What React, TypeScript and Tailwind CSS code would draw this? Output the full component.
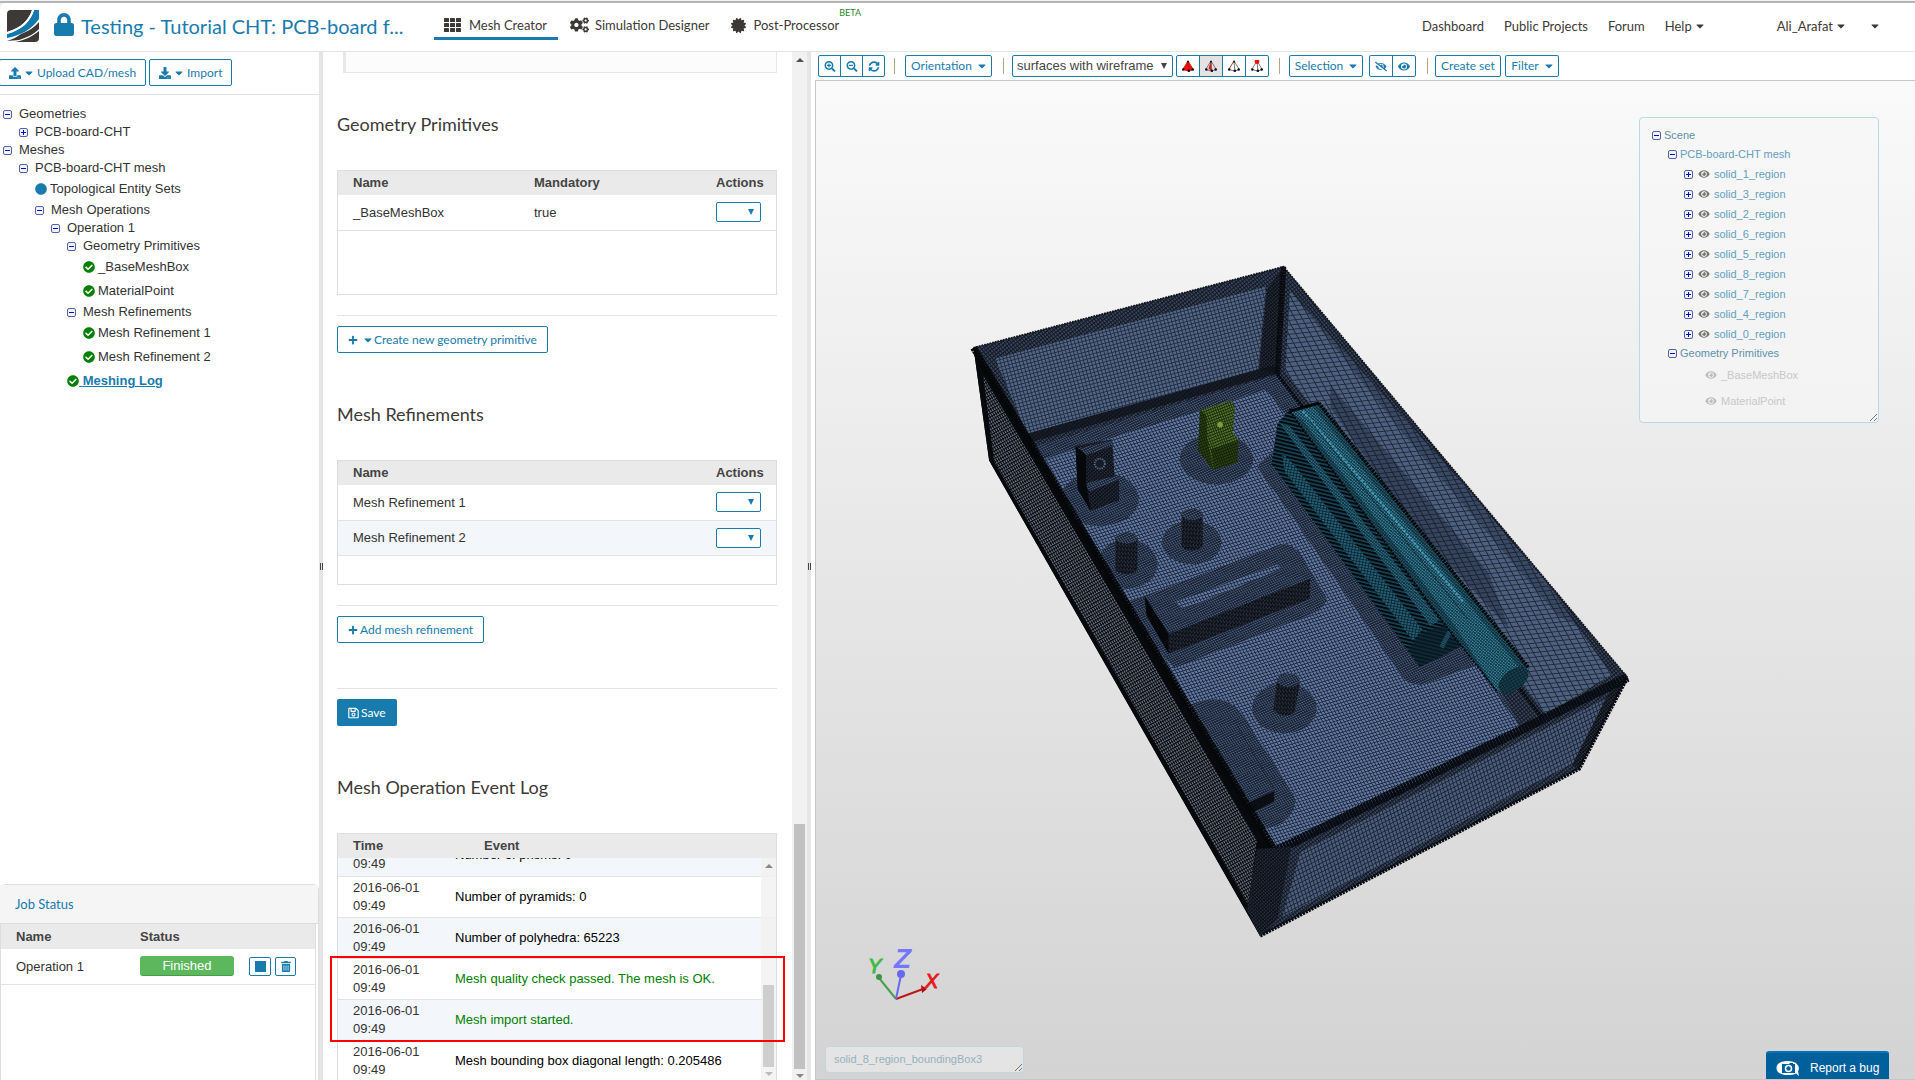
import type { ReactNode } from 'react';
import {
  FaCaretDown,
  FaCertificate,
  FaCheckCircle,
  FaCircle,
  FaCogs,
  FaDownload,
  FaEye,
  FaEyeSlash,
  FaLock,
  FaPlus,
  FaRegSave,
  FaSearchMinus,
  FaSearchPlus,
  FaSyncAlt,
  FaTrashAlt,
  FaUpload,
} from 'react-icons/fa';

const outlineButton =
  'flex items-center border border-[#187bae] rounded-xs bg-white text-[#187bae] whitespace-nowrap';

type TreeItem = { label: string; indent: string; kind: 'open' | 'closed' | 'dot' | 'ok' | 'active' };

const treeItems: TreeItem[] = [
  { label: 'Geometries', indent: 'pl-[3px]', kind: 'open' },
  { label: 'PCB-board-CHT', indent: 'pl-[19px]', kind: 'closed' },
  { label: 'Meshes', indent: 'pl-[3px]', kind: 'open' },
  { label: 'PCB-board-CHT mesh', indent: 'pl-[19px]', kind: 'open' },
  { label: 'Topological Entity Sets', indent: 'pl-[35px]', kind: 'dot' },
  { label: 'Mesh Operations', indent: 'pl-[35px]', kind: 'open' },
  { label: 'Operation 1', indent: 'pl-[51px]', kind: 'open' },
  { label: 'Geometry Primitives', indent: 'pl-[67px]', kind: 'open' },
  { label: '_BaseMeshBox', indent: 'pl-[83px]', kind: 'ok' },
  { label: 'MaterialPoint', indent: 'pl-[83px]', kind: 'ok' },
  { label: 'Mesh Refinements', indent: 'pl-[67px]', kind: 'open' },
  { label: 'Mesh Refinement 1', indent: 'pl-[83px]', kind: 'ok' },
  { label: 'Mesh Refinement 2', indent: 'pl-[83px]', kind: 'ok' },
  { label: 'Meshing Log', indent: 'pl-[67px]', kind: 'active' },
];

const logEvents = [
  { text: 'Number of prisms: 0', good: false },
  { text: 'Number of pyramids: 0', good: false },
  { text: 'Number of polyhedra: 65223', good: false },
  { text: 'Mesh quality check passed. The mesh is OK.', good: true },
  { text: 'Mesh import started.', good: true },
  { text: 'Mesh bounding box diagonal length: 0.205486', good: false },
];

const regions = [1, 3, 2, 6, 5, 8, 7, 4, 0];

function Toggle({ open, label }: { open: boolean; label: string }) {
  return (
    <button aria-label={`Toggle ${label}`} className="block h-[9px] w-[9px] shrink-0">
      <svg viewBox="0 0 9 9" className="block h-full w-full">
        <rect x="0.5" y="0.5" width="8" height="8" rx="1.5" fill="#f3f3f3" stroke="#4f62b0" />
        <path d={open ? 'M2 4.5H7' : 'M2 4.5H7M4.5 2V7'} stroke="#0808c8" />
      </svg>
    </button>
  );
}

function Tree() {
  return (
    <ul className="pt-[10px] text-[13px] leading-[18px] text-[#333]">
      {treeItems.map((item, i) => {
        if (item.kind === 'open' || item.kind === 'closed') {
          return (
            <li key={i} className={`flex h-[18px] items-center gap-[7px] ${item.indent}`}>
              <Toggle open={item.kind === 'open'} label={item.label} />
              <span>{item.label}</span>
            </li>
          );
        }
        return (
          <li key={i} className={`flex h-6 items-center ${item.kind === 'active' ? '' : 'gap-[3px]'} ${item.indent}`}>
            {item.kind === 'dot' ? (
              <FaCircle className="h-3 w-3 text-[#187bae]" />
            ) : (
              <FaCheckCircle className="h-3 w-3 text-[#008000]" />
            )}
            {item.kind === 'active' ? (
              <a href="#log" className="whitespace-pre font-bold text-[#187bae] underline"> {item.label}</a>
            ) : (
              <span>{item.label}</span>
            )}
          </li>
        );
      })}
    </ul>
  );
}

function Logo() {
  return (
    <svg viewBox="0 0 32 32" className="h-8 w-8 shrink-0">
      <path d="M4 0H25C22 10 14 18 0 22V4Q0 0 4 0Z" fill="#3d3936" />
      <path d="M27 0H32V9C25 19 14 26 0 29V24C15 20 24 11 27 0Z" fill="#1079ad" />
      <path d="M0 28C13 26 25 19 32 10V13C26 21 14 28 0 30Z" fill="#fff" />
      <path d="M14 24C22 21 28 17 32 12V19C28 23 22 27 12 30L0 31C6 29 10 27 14 24Z" fill="#3d3936" />
      <path d="M8 32C18 30 26 26 32 21V28Q32 32 28 32Z" fill="#3d3936" />
      <path d="M25 0C22 10 14 18 0 22V24C15 20 24 11 27 0Z" fill="#fff" />
    </svg>
  );
}

function Header() {
  return (
    <header className="mt-[3px] flex h-[49px] shrink-0 items-start rounded-tl-md border-b border-[#e3e3e3] bg-white font-[Lato,sans-serif] text-[#3d3936]">
      <div className="flex w-[434px] shrink-0 items-center pl-[7px] pt-[7px]">
        <Logo />
        <FaLock className="ml-[15px] mb-1 h-[23px] w-5 text-[#187bae]" />
        <h1 className="ml-[7px] whitespace-nowrap text-[20px] leading-6 text-[#187bae]">
          Testing - Tutorial CHT: PCB-board f...
        </h1>
      </div>
      <nav className="flex text-[13px] leading-5">
        <a href="#mesh" className="flex h-[37px] w-[124px] items-center gap-2 border-b-[3px] border-[#187bae] pl-[10px] pt-[10px]">
          <svg viewBox="0 0 17 14" className="h-[14px] w-[17px]" fill="#3d3936">
            {[0, 5, 10].map((y) => [0, 6, 12].map((x) => <rect key={`${x}-${y}`} x={x} y={y} width="5" height="4" rx="0.6" />))}
          </svg>
          Mesh Creator
        </a>
        <a href="#simulation" className="ml-3 flex h-[37px] items-center gap-[6px] pt-[7px]">
          <FaCogs className="h-[18px] w-[19px]" />
          Simulation Designer
        </a>
        <a href="#post" className="relative ml-[22px] flex h-[37px] items-center gap-[7px] pt-[7px]">
          <FaCertificate className="h-[15px] w-[15px]" />
          Post-Processor
          <span className="absolute left-full top-px text-[9px] leading-[18px] text-[#1e8a1e]">BETA</span>
        </a>
      </nav>
      <nav className="ml-auto flex items-center pr-9 pt-[13px] text-[13px] leading-5">
        <a href="#dashboard">Dashboard</a>
        <a href="#projects" className="ml-5">Public Projects</a>
        <a href="#forum" className="ml-5">Forum</a>
        <button className="ml-5 flex items-center gap-1">Help <FaCaretDown className="h-3 w-2" /></button>
        <button className="ml-[73px] flex items-center gap-1">Ali_Arafat <FaCaretDown className="h-3 w-2" /></button>
        <button aria-label="Account" className="ml-[26px]"><FaCaretDown className="h-3 w-2" /></button>
      </nav>
    </header>
  );
}

function JobStatus() {
  return (
    <section className="h-[196px] shrink-0 rounded-t-md border-t border-r border-[#ddd] font-[Liberation_Sans,Arial,sans-serif]">
      <h2 className="h-[39px] border-b border-[#ddd] bg-[#f5f5f5] pl-[15px] font-[Lato,sans-serif] text-[13px] leading-[38px] text-[#187bae]">
        Job Status
      </h2>
      <div className="mr-[2px] h-full border-x border-[#ddd]">
        <table className="w-full text-left text-[13px]">
          <thead className="h-[25px] bg-[#eaeaea] text-[#444]">
            <tr>
              <th className="w-[124px] pl-[15px]">Name</th>
              <th className="pl-[15px]">Status</th>
              <th className="w-[66px]" />
            </tr>
          </thead>
          <tbody>
            <tr className="h-[35px] border-b border-[#e3e3e3] text-[#333]">
              <td className="pl-[15px]">Operation 1</td>
              <td className="pl-[15px]">
                <span className="block h-5 w-[94px] rounded-[3px] border-b border-[#4a9a4a] bg-[#5cb85c] text-center leading-5 text-white">
                  Finished
                </span>
              </td>
              <td>
                <div className="flex gap-1">
                  <button aria-label="Stop" className={`${outlineButton} h-[19px] w-[22px] justify-center`}>
                    <span className="h-[11px] w-[11px] bg-[#187bae]" />
                  </button>
                  <button aria-label="Delete" className={`${outlineButton} h-[19px] w-[21px] justify-center`}>
                    <FaTrashAlt className="h-[11px] w-[10px]" />
                  </button>
                </div>
              </td>
            </tr>
          </tbody>
        </table>
      </div>
    </section>
  );
}

function Sidebar() {
  return (
    <aside className="flex w-[319px] shrink-0 flex-col bg-white">
      <div className="flex h-[43px] gap-[3px] border-b border-[#e3e3e3] pt-[7px] font-[Lato,sans-serif] text-[12px]">
        <button className={`${outlineButton} -ml-px h-[27px] gap-1 px-[9px]`}>
          <FaUpload className="h-3 w-3" /> <FaCaretDown className="h-3 w-2" /> Upload CAD/mesh
        </button>
        <button className={`${outlineButton} h-[27px] gap-1 px-[9px]`}>
          <FaDownload className="h-3 w-3" /> <FaCaretDown className="h-3 w-2" /> Import
        </button>
      </div>
      <div className="flex-1">
        <Tree />
      </div>
      <JobStatus />
    </aside>
  );
}

function Splitter() {
  return (
    <div className="flex w-1 shrink-0 items-center justify-center gap-px bg-[#e5e5e5]">
      <span className="h-[7px] w-px bg-[#444]" />
      <span className="h-[7px] w-px bg-[#444]" />
    </div>
  );
}

function ActionSelect({ label }: { label: string }) {
  return (
    <span className="relative block w-[45px]">
      <select aria-label={label} className="block h-5 w-[45px] appearance-none rounded-xs border border-[#187bae] bg-white" />
      <svg viewBox="0 0 6 6" className="pointer-events-none absolute right-[7px] top-[7px] h-[6px] w-[6px]">
        <path d="M0 0H6L3 6Z" fill="#187bae" />
      </svg>
    </span>
  );
}

function SectionTitle({ children }: { children: ReactNode }) {
  return <h2 className="font-[Lato,sans-serif] text-[18px] leading-6 text-[#3d3936]">{children}</h2>;
}

function EventLog() {
  return (
    <div id="log" className="relative mt-[34px] border border-[#ddd]">
      <table className="w-full text-left">
        <thead className="h-6 bg-[#eaeaea] text-[#444]">
          <tr>
            <th className="w-[102px] pl-[15px]">Time</th>
            <th className="pl-[44px]">Event</th>
          </tr>
        </thead>
      </table>
      <div className="relative h-[222px] overflow-hidden">
        <table className="-mt-[23px] w-full text-left">
          <tbody>
            {logEvents.map((event, i) => (
              <tr key={i} className="h-[41px] border-b border-[#e3e3e3] leading-[18px] even:bg-white odd:bg-[#f3f6fb]">
                <td className="w-[102px] pl-[15px] text-[#333]">2016-06-01<br />09:49</td>
                <td className={`pl-[15px] ${event.good ? 'text-[#008000]' : 'text-black'}`}>{event.text}</td>
              </tr>
            ))}
          </tbody>
        </table>
        <div className="absolute inset-y-0 right-0 flex w-[15px] flex-col items-center bg-[#f1f1f1]/80">
          <span className="mt-[6px] border-x-4 border-b-4 border-x-transparent border-b-[#888]" />
          <span className="mt-auto h-[82px] w-[11px] bg-[#cecece]" />
          <span className="mb-1 mt-[5px] border-x-4 border-t-4 border-x-transparent border-t-[#bbb]" />
        </div>
      </div>
      {/* highlight around the two success messages */}
      <div className="pointer-events-none absolute -left-2 -right-[9px] top-[122px] h-[86px] border-2 border-[#f00]" />
    </div>
  );
}

function OperationPanel() {
  return (
    <main className="flex w-[484px] shrink-0 bg-white">
      <div className="min-w-0 flex-1 overflow-hidden pl-[14px] pr-[15px] text-[13px]">
        <div className="ml-[6px] h-[21px] border-b border-l-[3px] border-r border-[#e8e8e8] bg-[#fcfcfc]" />
        <div className="mt-[39px]">
          <SectionTitle>Geometry Primitives</SectionTitle>
        </div>
        <div className="mt-[34px] h-[125px] border border-[#ddd]">
          <table className="w-full text-left">
            <thead className="h-6 bg-[#eaeaea] text-[#444]">
              <tr>
                <th className="w-[181px] pl-[15px]">Name</th>
                <th className="pl-[15px]">Mandatory</th>
                <th className="w-[75px] pl-[15px]">Actions</th>
              </tr>
            </thead>
            <tbody>
              <tr className="h-[35px] border-b border-[#e3e3e3] text-[#333]">
                <td className="pl-[15px]">_BaseMeshBox</td>
                <td className="pl-[15px]">true</td>
                <td className="pl-[15px]"><ActionSelect label="_BaseMeshBox actions" /></td>
              </tr>
            </tbody>
          </table>
        </div>
        <hr className="mt-5 border-[#e3e3e3]" />
        <button className={`${outlineButton} mt-[10px] h-[27px] gap-1 px-[10px] font-[Lato,sans-serif] text-[12px]`}>
          <FaPlus className="mr-1 h-[10px] w-[10px]" /> <FaCaretDown className="-ml-1 h-3 w-3" />
          <span className="-ml-1">Create new geometry primitive</span>
        </button>

        <div className="mt-[49px]">
          <SectionTitle>Mesh Refinements</SectionTitle>
        </div>
        <div className="mt-[34px] h-[125px] border border-[#ddd]">
          <table className="w-full text-left">
            <thead className="h-6 bg-[#eaeaea] text-[#444]">
              <tr>
                <th className="pl-[15px]">Name</th>
                <th className="w-[75px] pl-[15px]">Actions</th>
              </tr>
            </thead>
            <tbody>
              {['Mesh Refinement 1', 'Mesh Refinement 2'].map((name) => (
                <tr key={name} className="h-[35px] border-b border-[#e3e3e3] text-[#333] even:bg-[#f3f6fb]">
                  <td className="pl-[15px]">{name}</td>
                  <td className="pl-[15px]"><ActionSelect label={`${name} actions`} /></td>
                </tr>
              ))}
            </tbody>
          </table>
        </div>
        <hr className="mt-5 border-[#e3e3e3]" />
        <button className={`${outlineButton} mt-[10px] h-[27px] gap-[2px] px-[10px] font-[Lato,sans-serif] text-[12px]`}>
          <FaPlus className="h-[10px] w-[10px]" /> Add mesh refinement
        </button>
        <hr className="mt-[45px] border-[#e3e3e3]" />
        <button className="mt-[10px] flex h-[27px] items-center gap-[2px] rounded-xs bg-[#187bae] px-[11px] font-[Lato,sans-serif] text-[12px] text-white">
          <FaRegSave className="h-3 w-[11px]" /> Save
        </button>

        <div className="mt-[49px]">
          <SectionTitle>Mesh Operation Event Log</SectionTitle>
        </div>
        <EventLog />
      </div>
      <div className="flex w-[15px] flex-col items-center bg-[#f1f1f1]">
        <span className="mt-[6px] border-x-4 border-b-4 border-x-transparent border-b-[#505050]" />
        <span className="mt-auto h-[245px] w-[11px] bg-[#c1c1c1]" />
        <span className="mb-[2px] mt-[5px] border-x-4 border-t-4 border-x-transparent border-t-[#888]" />
      </div>
    </main>
  );
}

function Tetra({ mode }: { mode: 'solid' | 'faces' | 'edges' | 'nodes' }) {
  return (
    <svg viewBox="0 0 14 14" className="h-3 w-3" strokeLinejoin="round">
      {mode === 'solid' && <path d="M7 1L1 11L8 13L13 11Z" fill="#f01010" />}
      {mode === 'faces' && <path d="M7 1L4 10L8 13Z" fill="#f01010" />}
      <path
        d="M7 1L1 11L8 13L13 11ZM7 1L8 13"
        fill="none"
        stroke={mode === 'solid' ? '#c01010' : '#666'}
      />
      {mode === 'edges' && <path d="M7 1L1 11" stroke="#e33" strokeDasharray="2 1" />}
      <circle cx="1.5" cy="11" r="1.5" fill="#111" />
      <circle cx="12.5" cy="11" r="1.5" fill="#111" />
      <circle cx="8" cy="12.5" r="1.5" fill="#111" />
      <circle cx="7" cy="2" r={mode === 'nodes' ? 2.8 : 1.2} fill={mode === 'nodes' ? '#f01010' : '#111'} />
    </svg>
  );
}

function Divider() {
  return <span className="h-4 w-px bg-[#b8a386]" />;
}

function Toolbar() {
  return (
    <div className="flex h-7 shrink-0 items-center bg-white pl-[7px] font-[Lato,sans-serif] text-[12px]">
      <div className={`${outlineButton} h-[22px] divide-x divide-[#187bae]`}>
        <button aria-label="Zoom in" className="flex h-full w-[22px] items-center justify-center"><FaSearchPlus className="h-[11px]" /></button>
        <button aria-label="Zoom out" className="flex h-full w-[22px] items-center justify-center"><FaSearchMinus className="h-[11px]" /></button>
        <button aria-label="Refresh" className="flex h-full w-[21px] items-center justify-center"><FaSyncAlt className="h-[11px]" /></button>
      </div>
      <span className="w-[9px]" />
      <Divider />
      <button className={`${outlineButton} ml-[10px] h-[22px] w-[87px] justify-center gap-[6px]`}>
        Orientation <FaCaretDown className="h-3 w-2" />
      </button>
      <span className="w-[11px]" />
      <Divider />
      <span className="relative ml-2 block w-[161px]">
        <select
          aria-label="Render mode"
          className="block h-[22px] w-full appearance-none rounded-xs border border-[#187bae] bg-white px-1 font-[Liberation_Sans,Arial,sans-serif] text-[13px] text-[#444]"
        >
          <option>surfaces with wireframe</option>
        </select>
        <svg viewBox="0 0 6 6" className="pointer-events-none absolute right-[6px] top-2 h-[6px] w-[6px]">
          <path d="M0 0H6L3 6Z" fill="#444" />
        </svg>
      </span>
      <div className={`${outlineButton} ml-[3px] h-[22px] divide-x divide-[#187bae]`}>
        <button aria-label="Pick volumes" className="flex h-full w-[23px] items-center justify-center"><Tetra mode="solid" /></button>
        <button aria-label="Pick faces" className="flex h-full w-[23px] items-center justify-center bg-[#e3e3e3]"><Tetra mode="faces" /></button>
        <button aria-label="Pick edges" className="flex h-full w-[23px] items-center justify-center"><Tetra mode="edges" /></button>
        <button aria-label="Pick nodes" className="flex h-full w-[22px] items-center justify-center"><Tetra mode="nodes" /></button>
      </div>
      <span className="w-[10px]" />
      <Divider />
      <button className={`${outlineButton} ml-[9px] h-[22px] w-[74px] justify-center gap-[6px]`}>
        Selection <FaCaretDown className="h-3 w-2" />
      </button>
      <div className={`${outlineButton} ml-[6px] h-[22px] divide-x divide-[#187bae]`}>
        <button aria-label="Hide" className="flex h-full w-[23px] items-center justify-center"><FaEyeSlash className="h-[11px]" /></button>
        <button aria-label="Show" className="flex h-full w-[22px] items-center justify-center"><FaEye className="h-[11px]" /></button>
      </div>
      <span className="w-[11px]" />
      <Divider />
      <button className={`${outlineButton} ml-[7px] h-[22px] w-[66px] justify-center`}>Create set</button>
      <button className={`${outlineButton} ml-1 h-[22px] w-[54px] justify-center gap-[6px]`}>
        Filter <FaCaretDown className="h-3 w-2" />
      </button>
    </div>
  );
}

function Grip({ className }: { className: string }) {
  return (
    <svg viewBox="0 0 8 8" className={`absolute h-2 w-2 ${className}`}>
      <path d="M1 8L8 1M5 8L8 5" stroke="#777" />
    </svg>
  );
}

// Perspective view of the meshed enclosure, with its wireframe drawn by patterns
function MeshModel() {
  return (
    <svg
      viewBox="816 81 1099 998"
      preserveAspectRatio="xMidYMid meet"
      className="absolute inset-0 h-full w-full"
      role="img"
      aria-label="PCB board mesh"
    >
      <defs>
        <pattern id="floor" width="7" height="7" patternUnits="userSpaceOnUse" patternTransform="rotate(-17) skewX(12)">
          <rect width="7" height="7" fill="#6179a5" />
          <path d="M0 1H7M1 0V7" stroke="#1d2638" strokeWidth="1.9" />
        </pattern>
        <pattern id="fine" width="5" height="5" patternUnits="userSpaceOnUse" patternTransform="rotate(-24) skewX(12)">
          <rect width="5" height="5" fill="#50648a" />
          <path d="M0 1H5M1 0V5" stroke="#151c28" strokeWidth="1.8" />
        </pattern>
        <pattern id="back" width="8" height="8" patternUnits="userSpaceOnUse" patternTransform="rotate(-15)">
          <rect width="8" height="8" fill="#526688" />
          <path d="M0 1H8M1 0V8" stroke="#222c3d" strokeWidth="2" />
        </pattern>
        <pattern id="band" width="6" height="7" patternUnits="userSpaceOnUse" patternTransform="rotate(-38)">
          <rect width="6" height="7" fill="#3b475d" />
          <path d="M0 1H6M1 0V7" stroke="#121823" strokeWidth="2.4" />
        </pattern>
        <pattern id="side" width="11" height="14" patternUnits="userSpaceOnUse" patternTransform="rotate(62) skewX(-22)">
          <rect width="11" height="14" fill="#4e607f" />
          <path d="M0 1H11M1 0V14" stroke="#1e2736" strokeWidth="2.2" />
        </pattern>
        <pattern id="front" width="8" height="9" patternUnits="userSpaceOnUse" patternTransform="rotate(-27) skewX(-10)">
          <rect width="8" height="9" fill="#4b5c7c" />
          <path d="M0 1H8M1 0V9" stroke="#1c2433" strokeWidth="2" />
        </pattern>
        <pattern id="left" width="7" height="5" patternUnits="userSpaceOnUse" patternTransform="rotate(60)">
          <rect width="7" height="5" fill="#6a7483" />
          <path d="M0 1H7M1 0V5" stroke="#07090d" strokeWidth="2.4" />
        </pattern>
        <pattern id="edge" width="6" height="5" patternUnits="userSpaceOnUse" patternTransform="rotate(48)">
          <rect width="6" height="5" fill="#2a3343" />
          <path d="M0 1H6M1 0V5" stroke="#0b0e14" strokeWidth="2.4" />
        </pattern>
        <pattern id="dark" width="7" height="9" patternUnits="userSpaceOnUse" patternTransform="rotate(4)">
          <rect width="7" height="9" fill="#0a0d13" />
          <path d="M2 1V6M5 5V9" stroke="#414e63" strokeWidth="1.6" />
        </pattern>
        <pattern id="teal" width="5" height="5" patternUnits="userSpaceOnUse" patternTransform="rotate(40)">
          <rect width="5" height="5" fill="#3f90ac" />
          <path d="M0 1H5M1 0V5" stroke="#103442" strokeWidth="1.8" />
        </pattern>
        <pattern id="tealMid" width="7" height="6" patternUnits="userSpaceOnUse" patternTransform="rotate(10)">
          <rect width="7" height="6" fill="#26627a" />
          <path d="M0 1H7M1 0V6" stroke="#0c2833" strokeWidth="2.2" />
        </pattern>
        <pattern id="tealDark" width="13" height="8" patternUnits="userSpaceOnUse" patternTransform="rotate(14)">
          <rect width="13" height="8" fill="#18455a" />
          <path d="M0 2H13" stroke="#04090c" strokeWidth="5" />
        </pattern>
        <pattern id="green" width="5" height="6" patternUnits="userSpaceOnUse" patternTransform="rotate(-20)">
          <rect width="5" height="6" fill="#567a31" />
          <path d="M0 1H5M1 0V6" stroke="#1c2c0b" strokeWidth="1.8" />
        </pattern>
      </defs>
      <g transform="translate(940 240) scale(0.4592 0.4528)">
        {/* walls and floor */}
        <path d="M73 238L748 59L1497 966L1392 1168L697 1537L107 487Z" fill="#11151d" />
        <path d="M73 238L748 59L735 297L205 455Z" fill="url(#band)" />
        <path d="M120 262L710 103L693 285L190 428Z" fill="url(#back)" />
        <path d="M205 455L735 297L1315 1060L730 1350Z" fill="url(#fine)" />
        <path d="M225 485L710 330L760 396L722 480L1040 950L1150 912L1268 1082L730 1350Z" fill="url(#floor)" />
        <path d="M748 59L1497 966L1315 1060L735 297Z" fill="url(#band)" />
        <path d="M762 112L1140 540L1330 770L1462 960L1320 1048L752 290Z" fill="url(#side)" />
        <path d="M850 320L1195 735L1240 860L1030 630L850 370Z" fill="#111827" opacity="0.38" />
        <path d="M762 112L1100 490L1400 860L1345 830L1010 430Z" fill="#111827" opacity="0.3" />
        <path d="M1268 985L1315 1060L1268 1082L1225 1000Z" fill="url(#band)" />
        <path d="M735 297L1315 1060" stroke="#080a0f" strokeWidth="8" strokeDasharray="5 2" />
        <path d="M746 62L712 110L695 285L735 297Z" fill="url(#edge)" />
        <path d="M748 59L735 297" stroke="#080a0f" strokeWidth="12" strokeDasharray="5 1" />
        <path d="M190 438L730 286" stroke="#0c1017" strokeWidth="20" opacity="0.7" />

        {/* refinement halos on the floor */}
        <g fill="url(#fine)">
          <ellipse cx="348" cy="572" rx="85" ry="60" />
          <ellipse cx="602" cy="484" rx="80" ry="56" />
          <ellipse cx="548" cy="668" rx="65" ry="48" />
          <ellipse cx="408" cy="716" rx="66" ry="54" />
          <ellipse cx="750" cy="1034" rx="70" ry="56" />
          <path d="M410 800L740 672Q770 668 790 700L842 790Q842 810 810 826L510 946L430 850Z" />
          <path d="M535 1030Q620 990 660 1050L770 1225Q785 1260 735 1295L690 1300Z" />
          <path d="M690 500L722 470L1040 910L1150 912L1165 940L1050 982Q1010 985 990 940L760 600Z" />
        </g>

        {/* chips */}
        <path d="M295 455L375 440L380 520L390 530V575L328 598L300 550Z" fill="url(#edge)" />
        <path d="M302 460L376 442V455L318 475ZM316 538L385 520L390 530L325 555Z" fill="url(#fine)" />
        <path d="M295 455L318 475V535L328 598L300 550Z" fill="#06080c" />
        <circle cx="348" cy="494" r="11" fill="#161c27" stroke="#586a88" strokeWidth="4" strokeDasharray="3 2" />
        <path d="M566 375L632 355L642 365L638 425L650 440L648 492L596 508L562 465Z" fill="url(#green)" />
        <path d="M566 375L580 388L582 440L596 508L562 465ZM590 462L650 442L648 492L597 508Z" fill="#0d1804" opacity="0.55" />
        <circle cx="610" cy="408" r="8" fill="#7d9f40" stroke="#22330e" strokeWidth="4" strokeDasharray="3 2" />

        {/* capacitors */}
        <path d="M526 604V678Q548 695 572 678V604Z" fill="url(#dark)" />
        <ellipse cx="549" cy="606" rx="23" ry="13" fill="url(#fine)" />
        <path d="M382 656V730Q408 748 430 730V656Z" fill="url(#dark)" />
        <ellipse cx="406" cy="658" rx="24" ry="13" fill="url(#fine)" />
        <path d="M734 970L726 1038Q748 1060 772 1044L784 976Z" fill="url(#dark)" />
        <ellipse cx="759" cy="972" rx="25" ry="15" fill="url(#fine)" />

        {/* flat box */}
        <path d="M445 785L760 690L806 748L498 870Z" fill="url(#fine)" />
        <path d="M512 800L735 716L744 726L530 815Z" fill="url(#floor)" />
        <path d="M498 870L806 748V792L498 914Z" fill="url(#dark)" />
        <path d="M445 785L498 870V914L450 830Z" fill="#05070b" />
        <path d="M560 1035L600 1020L728 1218L664 1246Z" fill="url(#fine)" />
        <path d="M640 1060L726 1210" stroke="#161c28" strokeWidth="2" strokeDasharray="5 3" />
        <path d="M664 1246L728 1217V1240L680 1264Z" fill="#0b0e14" />

        {/* heat sink and tube */}
        <path d="M735 405L765 370L1110 845L1140 895L1045 943L722 495Z" fill="url(#tealDark)" />
        <path d="M745 470L770 495L1050 860L1030 885L750 510Z" fill="url(#tealMid)" />
        <path d="M740 405L762 412L1088 840L1068 852Z" fill="url(#teal)" opacity="0.75" />
        <path d="M1045 870L1110 846L1140 895L1045 943L1020 905Z" fill="#0b2029" opacity="0.7" />
        <path d="M1110 865L1092 900" stroke="#1f5365" strokeWidth="10" strokeDasharray="3 1" />
        <path d="M762 378L825 360L1282 945L1276 976L1215 1000L1100 850Z" fill="url(#teal)" />
        <path d="M762 378L790 398L1120 850L1215 1000L1100 850Z" fill="#05161d" opacity="0.4" />
        <path d="M810 365L825 360L1282 945L1262 945Z" fill="#05161d" opacity="0.35" />
        <path d="M790 378L960 580L1140 800" fill="none" stroke="#55b0d0" strokeWidth="5" strokeDasharray="6 3" opacity="0.7" />
        <path d="M800 392L1150 838" stroke="#08202a" strokeWidth="2" strokeDasharray="7 2" />
        <path d="M825 360L1282 945" stroke="#03080a" strokeWidth="8" strokeDasharray="5 2" />
        <path d="M762 378L1100 850L1215 1000" fill="none" stroke="#03080a" strokeWidth="4" strokeDasharray="5 3" />
        <path d="M762 378L825 360" stroke="#03080a" strokeWidth="7" />
        <ellipse cx="1249" cy="972" rx="38" ry="22" transform="rotate(-40 1249 972)" fill="#0a1f28" />
        <ellipse cx="1249" cy="972" rx="38" ry="22" transform="rotate(-40 1249 972)" fill="url(#tealMid)" opacity="0.5" />

        {/* outer walls nearest to the camera */}
        <path d="M73 238L107 487L697 1537L730 1350Z" fill="#07090d" />
        <path d="M94 300L690 1325L672 1470L118 490Z" fill="url(#left)" />
        <path d="M73 238L730 1350" stroke="#050709" strokeWidth="15" strokeDasharray="6 1" />
        <path d="M730 1350L1497 966L1392 1168L697 1537Z" fill="url(#band)" />
        <path d="M785 1352L1448 1014L1388 1150L745 1495Z" fill="url(#front)" />
        <path d="M1462 990L1497 966L1392 1168L1376 1160Z" fill="url(#edge)" />
        <path d="M730 1350L1497 966" stroke="#080b11" strokeWidth="20" strokeDasharray="6 1" />
        <path d="M697 1537L1392 1168L1497 966" fill="none" stroke="#080b11" strokeWidth="8" strokeDasharray="5 2" />
        <path d="M73 238L748 59L1497 966" fill="none" stroke="#12161f" strokeWidth="4" strokeDasharray="4 2" />
        <path d="M690 1345L765 1340L735 1500L697 1537L668 1480Z" fill="url(#edge)" />
      </g>

      {/* orientation axes */}
      <g fontFamily="Liberation Sans, Arial, sans-serif" fontStyle="italic" fontWeight="bold">
        <path d="M896 999L879 978" stroke="#49a04c" strokeWidth="2" />
        <path d="M896 999L923 989" stroke="#c01818" strokeWidth="2" />
        <path d="M896 999L901 975" stroke="#6969ee" strokeWidth="2" />
        <circle cx="879" cy="977" r="3" fill="#3f9442" />
        <path d="M921 985L927 989L922 993Z" fill="#b01010" />
        <circle cx="901" cy="974" r="4" fill="#6969ee" />
        <text x="868" y="973" fontSize="20" fontWeight="normal" fill="#3dba42" stroke="#3dba42">Y</text>
        <text x="894" y="968" fontSize="28" fill="#7575ff">Z</text>
        <text x="925" y="988" fontSize="20" fontWeight="normal" fill="#e51b1b" stroke="#e51b1b">X</text>
      </g>
    </svg>
  );
}

function ScenePanel() {
  return (
    <div className="absolute right-9 top-9 h-[306px] w-[240px] rounded-[4px] border border-[#b5dbe8] bg-[#f7f7f7]/60 pl-3 pt-[7px] font-[Liberation_Sans,Arial,sans-serif] text-[11px] text-[#62a0c0]">
      <div className="flex h-5 items-center gap-[3px]"><Toggle open label="scene" /><span className="text-[#5e92a8]">Scene</span></div>
      <div className="flex h-[19px] items-center gap-[3px] pl-4"><Toggle open label="mesh" />PCB-board-CHT mesh</div>
      {regions.map((id) => (
        <div key={id} className="flex h-5 items-center pl-8">
          <Toggle open={false} label={`region ${id}`} />
          <FaEye className="ml-[5px] mr-1 h-[10px] w-3 text-[#77776f]" />
          solid_{id}_region
        </div>
      ))}
      <div className="flex h-[18px] items-center gap-[3px] pl-4 text-[#5e92a8]"><Toggle open label="primitives" />Geometry Primitives</div>
      {['_BaseMeshBox', 'MaterialPoint'].map((name) => (
        <div key={name} className="flex h-[26px] items-center gap-1 pl-[53px] text-[#c8c8c8]">
          <FaEye className="h-[10px] w-3 text-[#bbb]" />
          {name}
        </div>
      ))}
      <Grip className="bottom-px right-px" />
    </div>
  );
}

function Viewport() {
  return (
    <section className="flex min-w-0 flex-1 flex-col bg-white">
      <Toolbar />
      <div className="relative ml-1 flex-1 overflow-hidden border border-r-0 border-[#c6c6c6] bg-linear-to-b from-[#fafafa] to-[#d3d3d3]">
        <MeshModel />
        <ScenePanel />
        <div className="absolute bottom-[6px] left-[9px] h-[27px] w-[199px] rounded-[4px] border border-[#c3d6de] bg-[#eee]/60 pl-2 font-[Liberation_Sans,Arial,sans-serif] text-[11px] leading-[25px] text-[#96b1bf]">
          solid_8_region_boundingBox3
          <Grip className="bottom-px right-px" />
        </div>
        <button className="absolute -bottom-px right-[26px] flex h-[29px] w-[123px] items-center gap-[10px] rounded-t-[3px] border-t-2 border-[#0874b8] bg-[#00609c] pl-[10px] pt-[3px] font-[Liberation_Sans,Arial,sans-serif] text-[12px] text-white">
          <svg viewBox="0 0 24 17" className="h-[17px] w-6">
            <path d="M12 1C5 1 0.500 3.500 0.500 8S5 15 12 15C15 15 18 14.500 20 13.500L23 16L22 11.500C25 6 20 1 12 1Z" fill="#fff" />
            <path d="M6 4H13L14 3H17V4H19V13H6Z" fill="#00609c" />
            <circle cx="12.500" cy="8.500" r="3" fill="none" stroke="#fff" strokeWidth="1.500" />
          </svg>
          Report a bug
        </button>
      </div>
    </section>
  );
}

export default function App() {
  return (
    <div className="flex h-screen flex-col overflow-hidden bg-[#f2f2f2] font-[Liberation_Sans,Arial,sans-serif]">
      <div className="-mb-[3px] h-[3px] shrink-0 border-t border-[#f2f2f2] bg-[#b5b5b5]" />
      <Header />
      <div className="flex min-h-0 flex-1">
        <Sidebar />
        <Splitter />
        <OperationPanel />
        <Splitter />
        <Viewport />
      </div>
    </div>
  );
}
